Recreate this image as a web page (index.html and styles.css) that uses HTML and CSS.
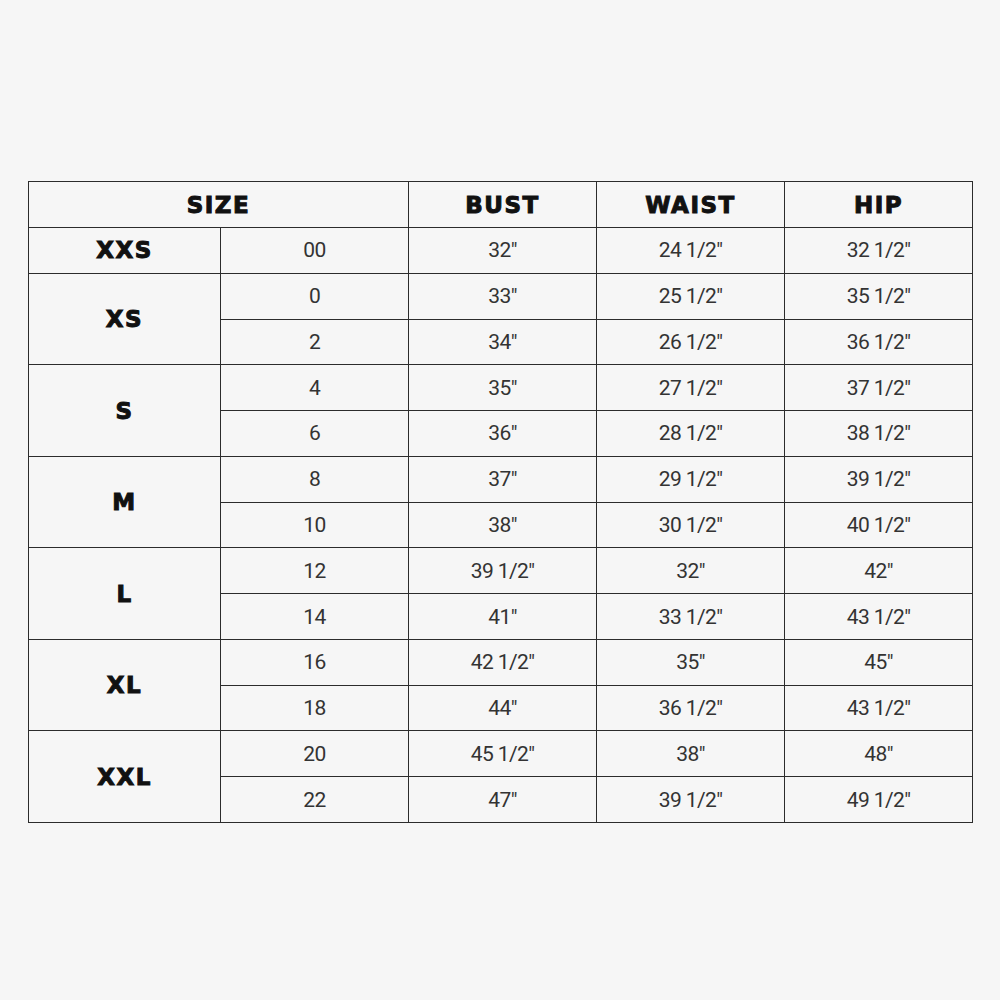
FILE: index.html
```html
<!DOCTYPE html>
<html>
<head>
<meta charset="utf-8">
<link rel="stylesheet" href="styles.css">
</head>
<body>
<table class="chart">
  <colgroup>
    <col class="c-size"><col class="c-num"><col class="c-m"><col class="c-m"><col class="c-m">
  </colgroup>
  <thead>
    <tr class="head">
      <th colspan="2">SIZE</th><th>BUST</th><th>WAIST</th><th>HIP</th>
    </tr>
  </thead>
  <tbody>
    <tr><th>XXS</th><td>00</td><td>32"</td><td>24 1/2"</td><td>32 1/2"</td></tr>
    <tr><th rowspan="2">XS</th><td>0</td><td>33"</td><td>25 1/2"</td><td>35 1/2"</td></tr>
    <tr><td>2</td><td>34"</td><td>26 1/2"</td><td>36 1/2"</td></tr>
    <tr><th rowspan="2">S</th><td>4</td><td>35"</td><td>27 1/2"</td><td>37 1/2"</td></tr>
    <tr><td>6</td><td>36"</td><td>28 1/2"</td><td>38 1/2"</td></tr>
    <tr><th rowspan="2">M</th><td>8</td><td>37"</td><td>29 1/2"</td><td>39 1/2"</td></tr>
    <tr><td>10</td><td>38"</td><td>30 1/2"</td><td>40 1/2"</td></tr>
    <tr><th rowspan="2">L</th><td>12</td><td>39 1/2"</td><td>32"</td><td>42"</td></tr>
    <tr><td>14</td><td>41"</td><td>33 1/2"</td><td>43 1/2"</td></tr>
    <tr><th rowspan="2">XL</th><td>16</td><td>42 1/2"</td><td>35"</td><td>45"</td></tr>
    <tr><td>18</td><td>44"</td><td>36 1/2"</td><td>43 1/2"</td></tr>
    <tr><th rowspan="2">XXL</th><td>20</td><td>45 1/2"</td><td>38"</td><td>48"</td></tr>
    <tr><td>22</td><td>47"</td><td>39 1/2"</td><td>49 1/2"</td></tr>
  </tbody>
</table>
</body>
</html>
```
FILE: styles.css
```css
html, body {
  margin: 0;
  padding: 0;
  background: #f6f6f6;
}
body {
  padding: 181px 28px 0 28px;
  width: 944px;
}
.chart {
  width: 944px;
  border-collapse: collapse;
  table-layout: fixed;
  color: #2e2e2e;
}
.c-size { width: 192px; }
.c-num { width: 188px; }
.c-m { width: 188px; }
.chart th, .chart td {
  border: 1.5px solid #2c2c2c;
  text-align: center;
  padding: 0;
  height: 44.77px;
}
.chart td {
  font-family: Roboto, "Liberation Sans", sans-serif;
  font-size: 21px;
  font-weight: 400;
  letter-spacing: -0.6px;
  color: #333;
}
.chart th {
  font-family: "DejaVu Sans", "Liberation Sans", sans-serif;
  font-weight: 700;
  font-size: 23px;
  letter-spacing: 1.5px;
  color: #111;
  -webkit-text-stroke: 1px #111;
}
.head th {
  height: 44px;
  padding-top: 1px;
}
```
